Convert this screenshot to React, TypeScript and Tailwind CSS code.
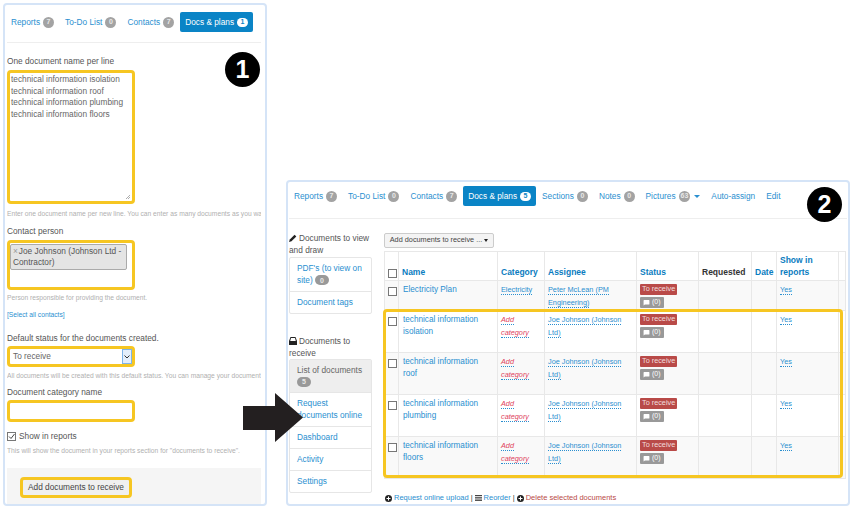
import { MessageSquare } from "lucide-react";

type Tab = { label: string; count?: string; active?: boolean; caret?: boolean };

const leftTabs: Tab[] = [
  { label: "Reports", count: "7" },
  { label: "To-Do List", count: "0" },
  { label: "Contacts", count: "7" },
  { label: "Docs & plans", count: "1", active: true },
];

const rightTabs: Tab[] = [
  { label: "Reports", count: "7" },
  { label: "To-Do List", count: "0" },
  { label: "Contacts", count: "7" },
  { label: "Docs & plans", count: "5", active: true },
  { label: "Sections", count: "0" },
  { label: "Notes", count: "0" },
  { label: "Pictures", count: "63", caret: true },
  { label: "Auto-assign" },
  { label: "Edit" },
];

type Row = { name: string[]; category: string | null; assignee: string[]; striped: boolean };

const rows: Row[] = [
  { name: ["Electricity Plan"], category: "Electricity", assignee: ["Peter McLean (PM", "Engineering)"], striped: true },
  { name: ["technical information", "isolation"], category: null, assignee: ["Joe Johnson (Johnson", "Ltd)"], striped: false },
  { name: ["technical information", "roof"], category: null, assignee: ["Joe Johnson (Johnson", "Ltd)"], striped: true },
  { name: ["technical information", "plumbing"], category: null, assignee: ["Joe Johnson (Johnson", "Ltd)"], striped: false },
  { name: ["technical information", "floors"], category: null, assignee: ["Joe Johnson (Johnson", "Ltd)"], striped: true },
];

function Tabs({ tabs }: { tabs: Tab[] }) {
  return (
    <div className="flex h-[24px] items-center gap-[11px] whitespace-nowrap text-[8.3px]">
      {tabs.map((tab) =>
        tab.active ? (
          <span
            key={tab.label}
            className="-mx-[5px] flex h-[20px] shrink-0 items-center gap-[3px] rounded-[2px] bg-[#0a84c6] px-[5px] text-white"
          >
            {tab.label}
            <span className="flex h-[9px] min-w-[11px] items-center justify-center rounded-full bg-white text-[7px] font-bold text-[#0a84c6]">
              {tab.count}
            </span>
          </span>
        ) : (
          <span key={tab.label} className="flex shrink-0 items-center gap-[3px] text-[#2a8fd0]">
            {tab.label}
            {tab.count && (
              <span className="flex h-[11px] min-w-[11px] items-center justify-center rounded-full bg-[#a3a3a3] px-[2px] text-[7px] font-bold text-[#e8e8e8]">
                {tab.count}
              </span>
            )}
            {tab.caret && (
              <span className="ml-[1px] h-0 w-0 border-x-[3px] border-t-[3px] border-x-transparent border-t-[#2a8fd0]" />
            )}
          </span>
        ),
      )}
    </div>
  );
}

function Help({ children }: { children: string }) {
  return (
    <p className="h-[10px] shrink-0 overflow-hidden whitespace-nowrap text-[6.7px] leading-[10px] text-[#b0b0b0]">
      {children}
    </p>
  );
}

function Marker({ n, className }: { n: string; className: string }) {
  return (
    <div
      className={`absolute flex h-[35px] w-[35px] items-center justify-center rounded-full bg-black text-[25px] font-bold text-white ${className}`}
    >
      {n}
    </div>
  );
}

function LeftPanel() {
  return (
    <div className="absolute left-[3px] top-[3px] flex h-[503px] w-[264px] flex-col rounded-[4px] border-2 border-[#d5e4f7] bg-white pl-[2px] pr-[4px] text-[8.3px] text-[#555555]">
      <div className="mt-[5px] flex h-[33px] shrink-0 items-start border-b border-[#eeeeee] pl-[4px]">
        <Tabs tabs={leftTabs} />
      </div>
      <label className="mt-[12px] h-[12px] shrink-0 leading-[12px]">One document name per line</label>
      <div className="relative mt-[3px] h-[134px] w-[128px] shrink-0 rounded-[4px] border-[3px] border-[#f6c622] py-[1px] pl-[1px] leading-[11.6px] text-[#666666]">
        <div>technical information isolation</div>
        <div>technical information roof</div>
        <div>technical information plumbing</div>
        <div>technical information floors</div>
        <svg className="absolute bottom-[1px] right-[1px]" width="6" height="6" viewBox="0 0 6 6">
          <path d="M5 1 1 5M5 3 3 5" stroke="#999999" strokeWidth="0.8" />
        </svg>
      </div>
      <div className="mt-[5px]">
        <Help>Enter one document name per new line. You can enter as many documents as you want</Help>
      </div>
      <label className="mt-[6px] h-[12px] shrink-0 leading-[12px]">Contact person</label>
      <div className="mt-[3px] h-[50px] w-[128px] shrink-0 rounded-[4px] border-[3px] border-[#f6c622] py-[1px]">
        <div className="w-[117px] rounded-[2px] border border-[#aaaaaa] bg-[#e4e4e4] px-[2px] py-[1px] leading-[11px] text-[#555555]">
          <span className="mr-[1px] text-[#999999]">×</span>Joe Johnson (Johnson Ltd - Contractor)
        </div>
      </div>
      <div className="mt-[3px]">
        <Help>Person responsible for providing the document.</Help>
      </div>
      <a className="mt-[7px] h-[10px] shrink-0 text-[6.7px] leading-[10px] text-[#2a8fd0]">[Select all contacts]</a>
      <label className="mt-[12px] h-[12px] shrink-0 leading-[12px]">Default status for the documents created.</label>
      <div className="mt-[2px] flex h-[21px] w-[128px] shrink-0 items-center justify-between rounded-[4px] border-[3px] border-[#f6c622] pl-[3px] text-[#666666]">
        <span>To receive</span>
        <span className="flex h-[15px] w-[10px] items-center justify-center border border-[#7eb4ea] bg-[#e3eefb]">
          <svg width="6" height="4" viewBox="0 0 6 4">
            <path d="M.5.5 3 3 5.5.5" fill="none" stroke="#333333" strokeWidth="1" />
          </svg>
        </span>
      </div>
      <div className="mt-[4px]">
        <Help>All documents will be created with this default status. You can manage your document statuses</Help>
      </div>
      <label className="mt-[5px] h-[12px] shrink-0 leading-[12px]">Document category name</label>
      <div className="mt-[2px] h-[22px] w-[128px] shrink-0 rounded-[4px] border-[3px] border-[#f6c622]" />
      <div className="mt-[7px] flex h-[14px] shrink-0 items-center gap-[3px]">
        <span className="flex h-[9px] w-[9px] items-center justify-center border border-[#777777]">
          <svg width="7" height="7" viewBox="0 0 7 7">
            <path d="M1 3.5 3 5.5 6.5 1" fill="none" stroke="#444444" strokeWidth="1" />
          </svg>
        </span>
        Show in reports
      </div>
      <div className="mt-[3px]">
        <Help>This will show the document in your reports section for "documents to receive".</Help>
      </div>
      <div className="mt-[12px] flex flex-1 items-start bg-[#f5f5f5] pl-[13px] pt-[9px]">
        <div className="flex h-[21px] w-[112px] items-center justify-center rounded-[4px] border-[3px] border-[#f6c622] bg-[#f0f0f0] text-[#444444]">
          Add documents to receive
        </div>
      </div>
    </div>
  );
}

type SideItem = { label: string[]; badge?: string; badgeBlock?: boolean; active?: boolean };

function SideBadge({ n }: { n: string }) {
  return (
    <span className="inline-flex h-[10px] min-w-[14px] items-center justify-center rounded-full bg-[#999999] align-middle text-[7px] font-bold text-[#e8e8e8]">
      {n}
    </span>
  );
}

function SideList({ items }: { items: SideItem[] }) {
  return (
    <div className="w-[83px] rounded-[2px] border border-[#e6e6e6] bg-white">
      {items.map((item, i) => (
        <div
          key={item.label.join()}
          className={`px-[7px] pb-[4.5px] pt-[5px] leading-[11.6px] ${i > 0 ? "border-t border-[#e6e6e6]" : ""} ${
            item.active ? "bg-[#eeeeee] text-[#666666]" : "text-[#2a8fd0]"
          }`}
        >
          {item.label.map((line) => (
            <div key={line}>
              {line}
              {item.badge && !item.badgeBlock && line === item.label[item.label.length - 1] && (
                <>
                  {" "}
                  <SideBadge n={item.badge} />
                </>
              )}
            </div>
          ))}
          {item.badge && item.badgeBlock && (
            <div className="flex h-[11.6px] items-center">
              <SideBadge n={item.badge} />
            </div>
          )}
        </div>
      ))}
    </div>
  );
}

function Cell({ children, className = "" }: { children?: React.ReactNode; className?: string }) {
  return <td className={`border border-[#e8e8e8] px-[3px] align-top ${className}`}>{children}</td>;
}

function Check() {
  return <span className="block h-[9px] w-[9px] border border-[#777777] bg-white" />;
}

function Status() {
  return (
    <div className="flex flex-col items-start gap-[2px] pt-[3px]">
      <span className="flex h-[11px] items-center rounded-[1px] bg-[#b94a48] px-[2px] text-[7.3px] text-[#f2dede]">
        To receive
      </span>
      <span className="flex h-[11px] items-center gap-[2px] rounded-[1px] bg-[#999999] px-[3px] text-[7px] text-white">
        <MessageSquare size={7} fill="white" strokeWidth={0} />
        (0)
      </span>
    </div>
  );
}

function Dotted({ children, color }: { children: string; color: string }) {
  return <span className={`border-b border-dotted ${color}`}>{children}</span>;
}

function DocumentsTable() {
  return (
    <table className="w-[461px] table-fixed border-collapse border border-[#e8e8e8] text-[7.3px]">
      <colgroup>
        <col className="w-[14px]" />
        <col className="w-[99px]" />
        <col className="w-[47px]" />
        <col className="w-[92px]" />
        <col className="w-[62px]" />
        <col className="w-[53px]" />
        <col className="w-[25px]" />
        <col className="w-[62px]" />
        <col className="w-[7px]" />
      </colgroup>
      <thead>
        <tr className="h-[29px] text-left align-bottom text-[8.5px] font-bold leading-[12px] text-[#0a7cc0]">
          <th className="border border-[#e8e8e8] px-[3px] pb-[2px]">
            <Check />
          </th>
          <th className="border border-[#e8e8e8] px-[3px] pb-[2px]">Name</th>
          <th className="border border-[#e8e8e8] px-[3px] pb-[2px]">Category</th>
          <th className="border border-[#e8e8e8] px-[3px] pb-[2px]">Assignee</th>
          <th className="border border-[#e8e8e8] px-[3px] pb-[2px]">Status</th>
          <th className="border border-[#e8e8e8] px-[3px] pb-[2px] text-[#333333]">Requested</th>
          <th className="border border-[#e8e8e8] px-[3px] pb-[2px]">Date</th>
          <th className="border border-[#e8e8e8] px-[3px] pb-[2px]">
            Show in
            <br />
            reports
          </th>
          <th className="border border-[#e8e8e8]" />
        </tr>
      </thead>
      <tbody>
        {rows.map((row, i) => (
          <tr key={i} className={`${i === 0 ? "h-[30px]" : "h-[42px]"} ${row.striped ? "bg-[#f9f9f9]" : "bg-white"}`}>
            <Cell className="pt-[6px]">
              <Check />
            </Cell>
            <Cell className="pl-[4px] pt-[3px] text-[8.2px] leading-[12px] text-[#2a8fd0]">
              {row.name.map((line) => (
                <div key={line}>{line}</div>
              ))}
            </Cell>
            <Cell className="pt-[3px] leading-[12.6px]">
              {row.category ? (
                <Dotted color="border-[#2a8fd0] text-[#2a8fd0]">{row.category}</Dotted>
              ) : (
                <span className="italic text-[#e0435c]">
                  <Dotted color="border-[#2a8fd0]">Add</Dotted>
                  <br />
                  <Dotted color="border-[#2a8fd0]">category</Dotted>
                </span>
              )}
            </Cell>
            <Cell className="pt-[3px] leading-[12.6px] text-[#2a8fd0]">
              {row.assignee.map((line) => (
                <div key={line}>
                  <Dotted color="border-[#2a8fd0]">{line}</Dotted>
                </div>
              ))}
            </Cell>
            <Cell>
              <Status />
            </Cell>
            <Cell />
            <Cell />
            <Cell className="pt-[3px] leading-[12.6px] text-[#2a8fd0]">
              <Dotted color="border-[#2a8fd0]">Yes</Dotted>
            </Cell>
            <Cell />
          </tr>
        ))}
      </tbody>
    </table>
  );
}

function RoundIcon() {
  return (
    <svg width="7" height="7" viewBox="0 0 7 7">
      <circle cx="3.5" cy="3.5" r="3.5" fill="#222222" />
      <path d="M3.5 1.5v4M1.5 3.5h4" stroke="white" strokeWidth="1" />
    </svg>
  );
}

function RightPanel() {
  return (
    <div className="absolute left-[286px] top-[180px] flex h-[326px] w-[564px] flex-col rounded-[4px] border-2 border-[#d5e4f7] bg-white px-[1px] text-[8.3px] text-[#555555]">
      <div className="mt-[2px] flex h-[35px] shrink-0 items-start border-b border-[#eeeeee] pl-[5px]">
        <Tabs tabs={rightTabs} />
      </div>
      <div className="flex">
        <div className="w-[83px] pt-[13px]">
          <div className="leading-[12px]">
            <svg className="mr-[2px] inline-block align-[-1px]" width="8" height="8" viewBox="0 0 8 8">
              <path d="M0 8 .8 5.5 5.6.7 7.3 2.4 2.5 7.2Z" fill="#222222" />
            </svg>
            Documents to view and draw
          </div>
          <div className="mt-[1px]">
            <SideList items={[{ label: ["PDF's (to view on", "site)"], badge: "0" }, { label: ["Document tags"] }]} />
          </div>
          <div className="mt-[21px] leading-[12px]">
            <svg className="mr-[2px] inline-block align-[-1px]" width="8" height="8" viewBox="0 0 8 8">
              <path d="M1.5 0H6.5L8 4V8H0V4ZM2 1 1.2 4H6.8L6 1Z" fill="#222222" fillRule="evenodd" />
            </svg>
            Documents to receive
          </div>
          <SideList
            items={[
              { label: ["List of documents"], badge: "5", badgeBlock: true, active: true },
              { label: ["Request", "documents online"] },
              { label: ["Dashboard"] },
              { label: ["Activity"] },
              { label: ["Settings"] },
            ]}
          />
        </div>
        <div className="ml-[12px] flex flex-col pt-[14px]">
          <div className="flex h-[15px] w-[110px] items-center justify-center gap-[2px] rounded-[2px] border border-[#cccccc] bg-[#f4f4f4] text-[7.3px] text-[#444444]">
            Add documents to receive ...
            <span className="h-0 w-0 border-x-[2.5px] border-t-[3px] border-x-transparent border-t-[#222222]" />
          </div>
          <div className="mt-[3px]">
            <DocumentsTable />
          </div>
          <div className="ml-[1px] mt-[14px] flex h-[10px] items-center gap-[2px] text-[7.5px] text-[#2a8fd0]">
            <RoundIcon />
            Request online upload
            <span className="text-[#333333]">|</span>
            <svg width="7" height="6" viewBox="0 0 7 6">
              <path d="M0 .5h7M0 2.3h7M0 4h7M0 5.6h7" stroke="#444444" strokeWidth="1" />
            </svg>
            Reorder
            <span className="text-[#333333]">|</span>
            <RoundIcon />
            <span className="text-[#b94a48]">Delete selected documents</span>
          </div>
        </div>
      </div>
    </div>
  );
}

export default function App() {
  return (
    <div className="relative h-[510px] w-[855px] overflow-hidden bg-white font-['Liberation_Sans',Arial,sans-serif]">
      <LeftPanel />
      <RightPanel />
      <Marker n="1" className="left-[225px] top-[52px]" />
      <Marker n="2" className="left-[807px] top-[187px]" />
      {/* yellow frame around the four new rows */}
      <div className="absolute left-[383px] top-[309px] h-[169px] w-[460px] rounded-[4px] border-[3px] border-[#f6c622]" />
      <svg className="absolute left-[243px] top-[393px]" width="61" height="49" viewBox="0 0 61 49">
        <path d="M0 13H32V0L60 24.5 32 49V37H0Z" fill="#231f20" />
      </svg>
    </div>
  );
}
